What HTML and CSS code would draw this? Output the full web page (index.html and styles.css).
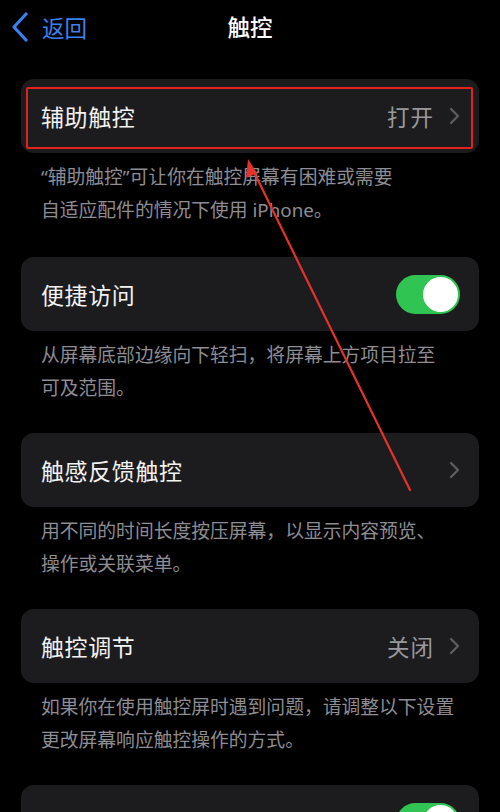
FILE: index.html
```html
<!DOCTYPE html>
<html lang="zh-CN">
<head>
<meta charset="utf-8">
<link rel="stylesheet" href="styles.css">
</head>
<body>
<div class="screen">
  <header class="nav">
    <div class="back">
      <svg class="back-chev" width="18" height="30" viewBox="0 0 18 30"><polyline points="15,2 3,15 15,28" fill="none" stroke="#3b80ef" stroke-width="3.2" stroke-linecap="round" stroke-linejoin="round"/></svg>
      <span class="back-text">返回</span>
    </div>
    <div class="title">触控</div>
  </header>

  <main class="content">
    <section class="group">
      <div class="card">
        <span class="label">辅助触控</span>
        <span class="value">打开</span>
        <svg class="chev" width="11" height="18" viewBox="0 0 11 18"><polyline points="2,2 9,9 2,16" fill="none" stroke="#5c5c61" stroke-width="2.4" stroke-linecap="round" stroke-linejoin="round"/></svg>
        <div class="highlight"></div>
      </div>
      <p class="desc">“辅助触控”可让你在触控屏幕有困难或需要<br>自适应配件的情况下使用 iPhone。</p>
    </section>

    <section class="group">
      <div class="card">
        <span class="label">便捷访问</span>
        <span class="toggle"><span class="knob"></span></span>
      </div>
      <p class="desc">从屏幕底部边缘向下轻扫，将屏幕上方项目拉至<br>可及范围。</p>
    </section>

    <section class="group">
      <div class="card">
        <span class="label">触感反馈触控</span>
        <svg class="chev" width="11" height="18" viewBox="0 0 11 18"><polyline points="2,2 9,9 2,16" fill="none" stroke="#5c5c61" stroke-width="2.4" stroke-linecap="round" stroke-linejoin="round"/></svg>
      </div>
      <p class="desc">用不同的时间长度按压屏幕，以显示内容预览、<br>操作或关联菜单。</p>
    </section>

    <section class="group">
      <div class="card">
        <span class="label">触控调节</span>
        <span class="value">关闭</span>
        <svg class="chev" width="11" height="18" viewBox="0 0 11 18"><polyline points="2,2 9,9 2,16" fill="none" stroke="#5c5c61" stroke-width="2.4" stroke-linecap="round" stroke-linejoin="round"/></svg>
      </div>
      <p class="desc">如果你在使用触控屏时遇到问题，请调整以下设置<br>更改屏幕响应触控操作的方式。</p>
    </section>

    <section class="group">
      <div class="card">
        <span class="label">摇动以撤销</span>
        <span class="toggle"><span class="knob"></span></span>
      </div>
    </section>
  </main>

  <svg class="arrow" width="500" height="812" viewBox="0 0 500 812">
    <line x1="410" y1="490" x2="251" y2="166" stroke="#e5322a" stroke-width="2.2" stroke-linecap="round"/>
    <polygon points="248,159 246,178 257,173" fill="#e5322a"/>
  </svg>
</div>
</body>
</html>
```

FILE: styles.css
```css
html, body {
  margin: 0;
  padding: 0;
  background: #000;
}

body {
  font-family: "Noto Sans CJK SC", "Noto Sans", sans-serif;
  color: #fff;
}

.screen {
  position: relative;
  width: 500px;
  height: 812px;
  overflow: hidden;
  background: #000;
}

.nav {
  position: relative;
  height: 54px;
  display: flex;
  align-items: center;
  justify-content: center;
}

.back {
  position: absolute;
  left: 11px;
  top: 12px;
  display: flex;
  align-items: center;
  gap: 13px;
}

.back-text {
  color: #3b80ef;
  font-size: 22.5px;
  line-height: 30px;
}

.title {
  font-size: 22.5px;
  font-weight: 500;
  line-height: 30px;
  margin-top: -2px;
}

.content {
  padding: 25px 21px 0 21px;
  display: flex;
  flex-direction: column;
}

.group {
  display: flex;
  flex-direction: column;
  margin-bottom: 28px;
}

.group + .group {
  margin-top: 2px;
}

.group + .group + .group {
  margin-top: 0;
}

.card {
  position: relative;
  height: 74px;
  background: #1c1c1e;
  border-radius: 13px;
  display: flex;
  align-items: center;
  padding: 0 20px;
  box-sizing: border-box;
}

.label {
  flex: 1;
  font-size: 23px;
  color: #f2f2f2;
  letter-spacing: 0.6px;
}

.value {
  font-size: 22.5px;
  color: #98989d;
  margin-right: 15px;
  letter-spacing: 1px;
}

.chev {
  margin-right: -1px;
}

.highlight {
  position: absolute;
  left: 5px;
  right: 6px;
  top: 8px;
  bottom: 4px;
  border: 2.5px solid #e0231c;
  border-radius: 2px;
}

.toggle {
  width: 64px;
  height: 39px;
  border-radius: 20px;
  background: #30c552;
  position: relative;
  margin-right: -1px;
}

.knob {
  position: absolute;
  right: 2px;
  top: 2px;
  width: 35px;
  height: 35px;
  border-radius: 50%;
  background: #fff;
}

.desc {
  margin: 0;
  padding: 8px 20px 0 20px;
  font-family: "Noto Sans", "Noto Sans CJK SC", sans-serif;
  font-size: 18.8px;
  line-height: 33px;
  color: #8d8d93;
}

.arrow {
  position: absolute;
  left: 0;
  top: 0;
  pointer-events: none;
}
```
